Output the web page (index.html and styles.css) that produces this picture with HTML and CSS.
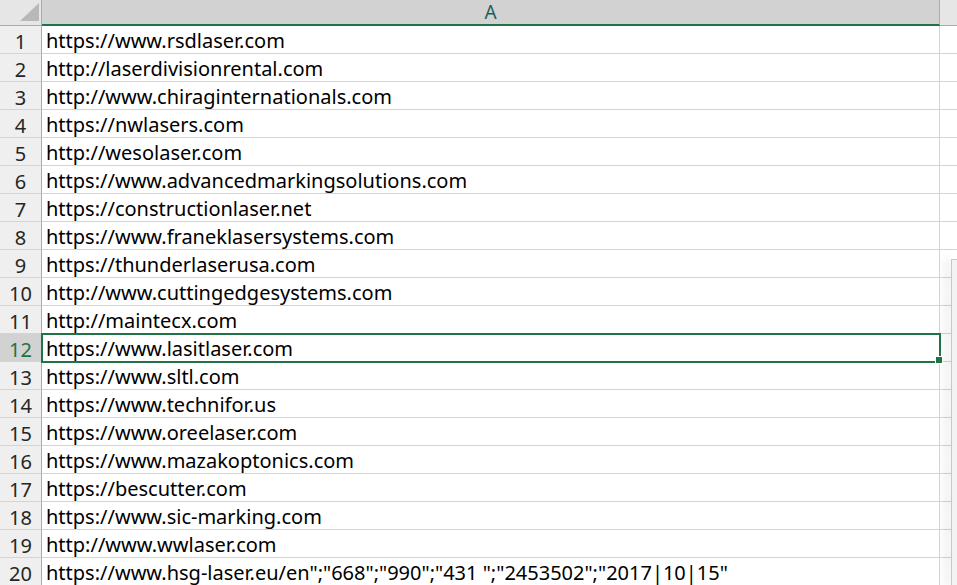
FILE: index.html
```html
<!DOCTYPE html>
<html>
<head>
<meta charset="utf-8">
<link rel="stylesheet" href="styles.css">
</head>
<body>
<div class="sheet">
  <div class="row head">
    <div class="rh corner"><span class="tri"></span></div>
    <div class="cell colhead">A</div>
    <div class="colb hb"></div>
  </div>
  <div class="row"><div class="rh">1</div><div class="cell">https://www.rsdlaser.com</div><div class="colb"></div></div>
  <div class="row"><div class="rh">2</div><div class="cell">http://laserdivisionrental.com</div><div class="colb"></div></div>
  <div class="row"><div class="rh">3</div><div class="cell">http://www.chiraginternationals.com</div><div class="colb"></div></div>
  <div class="row"><div class="rh">4</div><div class="cell">https://nwlasers.com</div><div class="colb"></div></div>
  <div class="row"><div class="rh">5</div><div class="cell">http://wesolaser.com</div><div class="colb"></div></div>
  <div class="row"><div class="rh">6</div><div class="cell">https://www.advancedmarkingsolutions.com</div><div class="colb"></div></div>
  <div class="row"><div class="rh">7</div><div class="cell">https://constructionlaser.net</div><div class="colb"></div></div>
  <div class="row"><div class="rh">8</div><div class="cell">https://www.franeklasersystems.com</div><div class="colb"></div></div>
  <div class="row"><div class="rh">9</div><div class="cell">https://thunderlaserusa.com</div><div class="colb"><span class="panel top"></span></div></div>
  <div class="row"><div class="rh">10</div><div class="cell">http://www.cuttingedgesystems.com</div><div class="colb"><span class="panel"></span></div></div>
  <div class="row"><div class="rh">11</div><div class="cell">http://maintecx.com</div><div class="colb"><span class="panel"></span></div></div>
  <div class="row"><div class="rh sel">12</div><div class="cell selcell">https://www.lasitlaser.com<span class="handle"></span></div><div class="colb"><span class="panel"></span></div></div>
  <div class="row"><div class="rh">13</div><div class="cell">https://www.sltl.com</div><div class="colb"><span class="panel"></span></div></div>
  <div class="row"><div class="rh">14</div><div class="cell">https://www.technifor.us</div><div class="colb"><span class="panel"></span></div></div>
  <div class="row"><div class="rh">15</div><div class="cell">https://www.oreelaser.com</div><div class="colb"><span class="panel"></span></div></div>
  <div class="row"><div class="rh">16</div><div class="cell">https://www.mazakoptonics.com</div><div class="colb"><span class="panel"></span></div></div>
  <div class="row"><div class="rh">17</div><div class="cell">https://bescutter.com</div><div class="colb"><span class="panel"></span></div></div>
  <div class="row"><div class="rh">18</div><div class="cell">https://www.sic-marking.com</div><div class="colb"><span class="panel"></span></div></div>
  <div class="row"><div class="rh">19</div><div class="cell">http://www.wwlaser.com</div><div class="colb"><span class="panel"></span></div></div>
  <div class="row"><div class="rh">20</div><div class="cell">https://www.hsg-laser.eu/en";"668";"990";"431 ";"2453502";"2017|10|15"</div><div class="colb"><span class="panel"></span></div></div>
</div>
</body>
</html>
```
FILE: styles.css
```css
html, body {
  margin: 0;
  padding: 0;
  background: #ffffff;
  overflow: hidden;
}
.sheet {
  width: 957px;
  height: 585px;
  overflow: hidden;
  font-family: "Noto Sans", "Liberation Sans", sans-serif;
}
.row {
  display: flex;
  height: 28px;
}
.row.head {
  height: 26px;
}
.rh {
  width: 42px;
  flex: none;
  box-sizing: border-box;
  background: #efefef;
  border-right: 1px solid #ababab;
  border-bottom: 1px solid #d4d4d4;
  color: #262626;
  font-size: 20px;
  line-height: 27px;
  padding-top: 2px;
  text-align: center;
}
.rh.sel {
  background: #d2d2d2;
  color: #217346;
}
.corner {
  background: #e6e6e6;
  border-bottom: 1px solid #ababab;
  padding-top: 0;
  position: relative;
}
.tri {
  position: absolute;
  right: 2px;
  bottom: 4px;
  width: 0;
  height: 0;
  border-left: 19px solid transparent;
  border-bottom: 18px solid #b8b8b8;
}
.cell {
  width: 898px;
  flex: none;
  box-sizing: border-box;
  border-right: 1px solid #d4d4d4;
  border-bottom: 1px solid #d4d4d4;
  padding-left: 4px;
  padding-top: 2px;
  font-size: 20px;
  line-height: 26px;
  color: #000;
  white-space: nowrap;
  position: relative;
}
.colhead {
  background: #d2d2d2;
  border-bottom: 2px solid #217346;
  border-right: 1px solid #ababab;
  text-align: center;
  padding-left: 0;
  padding-top: 0;
  color: #1f5f5a;
  font-size: 19px;
  line-height: 25px;
}
.selcell {
  outline: 2px solid #217346;
  outline-offset: -1px;
  z-index: 2;
}
.handle {
  position: absolute;
  right: -4px;
  bottom: -3px;
  width: 6px;
  height: 6px;
  background: #217346;
  border: 1px solid #fff;
}
.colb {
  flex: 1;
  box-sizing: border-box;
  border-bottom: 1px solid #d4d4d4;
  position: relative;
}
.colb.hb {
  background: #e6e6e6;
  border-bottom: 1px solid #ababab;
}
.panel {
  position: absolute;
  left: 11px;
  top: -1px;
  bottom: -1px;
  right: 0;
  background: #f3f3f3;
  border-left: 1px solid #c8c8c8;
  box-shadow: -6px 0 8px rgba(0,0,0,0.08);
}
.panel.top {
  top: 9px;
  border-top: 1px solid #c8c8c8;
}
```
